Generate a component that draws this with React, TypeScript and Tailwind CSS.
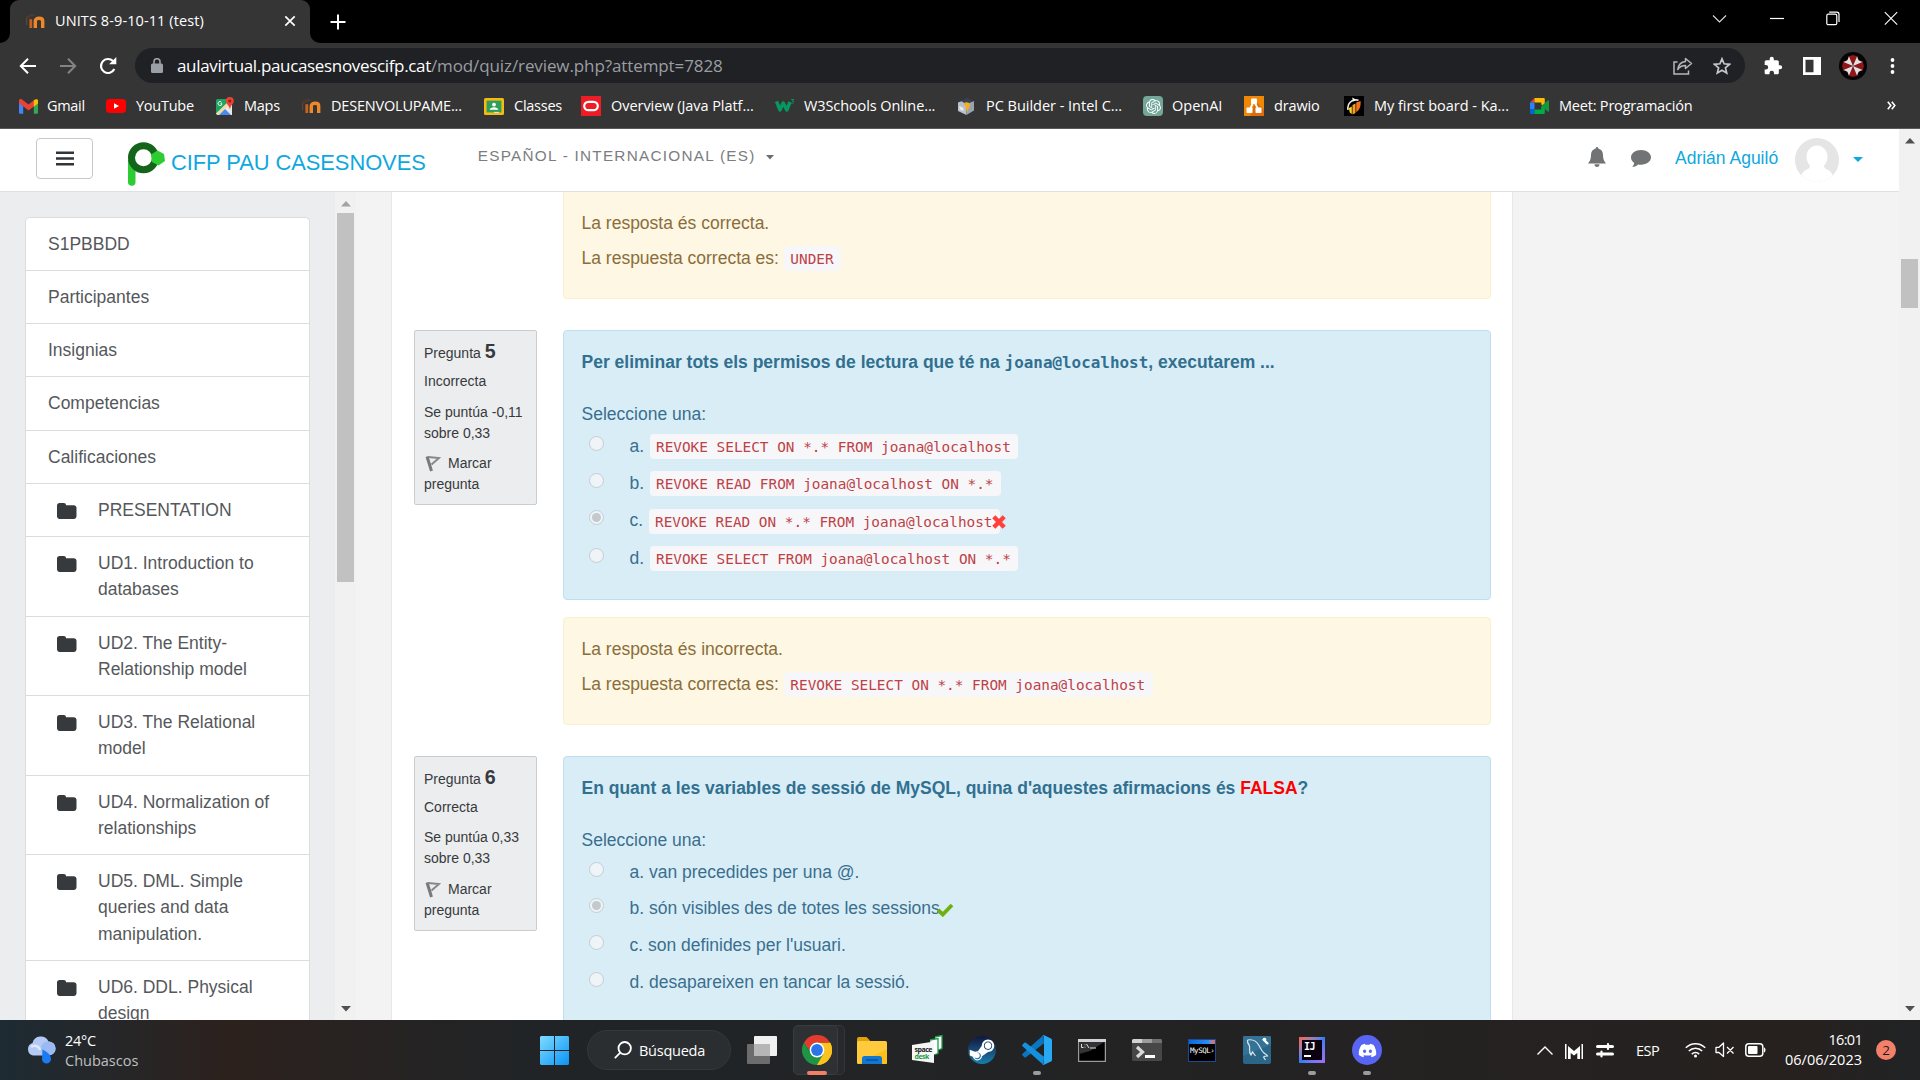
import React from 'react';
import { FaDiscord, FaSteamSymbol } from 'react-icons/fa';
import { SiOpenai } from 'react-icons/si';

/* ---------- small icons ---------- */

const MoodleIcon = ({ className = '' }: { className?: string }) => (
  <svg className={className} width="20" height="16" viewBox="0 0 20 16" fill="none">
    <path d="M0 3.600 7 .4l4.500 2-5 1.200L2.500 6z" fill="#4a3a30" />
    <path d="M1.600 5v7" stroke="#5a4636" strokeWidth="1.200" />
    <path d="M5.800 15V6.200" stroke="#c9631f" strokeWidth="2.800" />
    <path d="M10.300 15V8c0-3.600 7.400-3.600 7.400 0v7" stroke="#f0882a" strokeWidth="3.400" />
  </svg>
);

const GmailIcon = () => (
  <svg width="19" height="15" viewBox="0 0 19 15">
    <path d="M0 2v11.6c0 .8.5 1.2 1.2 1.2h3V6z" fill="#4285f4" />
    <path d="M19 2v11.6c0 .8-.5 1.2-1.2 1.2h-3V6z" fill="#34a853" />
    <path d="M14.8 1.2 19 .8v3.4l-4.2 3.2z" fill="#fbbc04" />
    <path d="M0 1.6C0 0 2-.3 3 .5L9.5 5.600 16 .5l-1.200 6.900-5.300 4L0 4z" fill="#ea4335" />
    <path d="M14.8 1.400C16.400-.2 19 0 19 2v2.200l-4.200 3.200z" fill="#fbbc04" />
  </svg>
);

const YouTubeIcon = () => (
  <svg width="20" height="14" viewBox="0 0 20 14">
    <rect width="20" height="14" rx="3.4" fill="#f00" />
    <path d="M8 4.200 13 7 8 9.800z" fill="#fff" />
  </svg>
);

const MapsIcon = () => (
  <svg width="18" height="19" viewBox="0 0 18 19">
    <rect x="0" y="2" width="16" height="16" rx="1.5" fill="#1fa463" />
    <path d="M0 16.500 14 3l2 1.500V18H1.500z" fill="#e8e8e8" />
    <path d="m3 18 6-6 6 6z" fill="#4a89f3" />
    <path d="M1 16 13 4l1.800 1.800L2.500 18z" fill="#fcd34d" opacity=".55" />
    <path d="M5.600 5.300a2 2 0 1 0 .4 1.500H4.400" stroke="#fff" strokeWidth=".9" fill="none" />
    <path d="M13.800 0a4 4 0 0 1 4 4c0 3-3.300 4-3.800 8.500C13.300 8 9.800 7 9.800 4a4 4 0 0 1 4-4z" fill="#ea4335" />
    <circle cx="13.800" cy="4" r="1.500" fill="#8c1f1a" />
  </svg>
);

const ClassesIcon = () => (
  <svg width="20" height="17" viewBox="0 0 20 17">
    <rect width="20" height="17" rx="1.500" fill="#f6bb12" />
    <rect x="2.600" y="2.600" width="14.800" height="11.800" fill="#2f9e5b" />
    <circle cx="10" cy="6.600" r="1.900" fill="#fff" />
    <path d="M5.600 11.800c.4-3.400 8.400-3.400 8.800 0z" fill="#fff" />
    <path d="M10 14.400h5" stroke="#e8e8e8" strokeWidth="1" />
  </svg>
);

const OracleIcon = () => (
  <svg width="20" height="20" viewBox="0 0 20 20">
    <rect width="20" height="20" fill="#ee1c25" />
    <rect x="3.200" y="5.800" width="13.600" height="8.400" rx="4.200" fill="none" stroke="#fff" strokeWidth="2.200" />
  </svg>
);

const W3Icon = () => (
  <svg width="20" height="16" viewBox="0 0 20 16" fill="none">
    <path d="M1.500 3.500 5 12 8.200 5l3.600 7L15 4" stroke="#059862" strokeWidth="3.400" strokeLinejoin="round" />
    <path d="M16.200 1.500h2.600l-1.400 1.600c2 .1 1.700 2.600-1.200 2" stroke="#059862" strokeWidth="1" />
  </svg>
);

const PcBuilderIcon = () => (
  <svg width="17" height="17" viewBox="0 0 17 17">
    <path d="m0 4.500 4-1.500 4.500 3V17L0 13z" fill="#b9bfca" />
    <path d="M8.500 6 16 3v9.500L8.500 17z" fill="#9aa2b1" />
    <path d="M2.500 2.800 9.500 0 15 3 8.500 6z" fill="#3a4256" />
    <path d="M5.500 6c1.500-3 7-2 6.500 1.500-.3 2-2 3-3 7L7.500 8z" fill="#f2b01e" />
    <path d="M1.500 8 5.500 10v3l-4-1.500z" fill="#e9ecf2" />
  </svg>
);

const OpenAiIcon = () => (
  <span className="flex size-5 items-center justify-center rounded-[4px] bg-[#74a79a] text-[15px] text-white">
    <SiOpenai />
  </span>
);

const DrawioIcon = () => (
  <svg width="20" height="20" viewBox="0 0 20 20">
    <rect width="20" height="20" fill="#f08705" />
    <path d="m12 5 8 9v6H6z" fill="#df6c0c" />
    <path d="M10 5 5.500 14M10 5l4.500 9" stroke="#fff" strokeWidth="1.800" />
    <rect x="7" y="2.500" width="6" height="5.500" rx=".8" fill="#fff" />
    <rect x="2.500" y="11.500" width="6" height="5.500" rx=".8" fill="#fff" />
    <rect x="11.500" y="11.500" width="6" height="5.500" rx=".8" fill="#fff" />
  </svg>
);

const BoardIcon = () => (
  <svg width="20" height="20" viewBox="0 0 20 20">
    <rect width="20" height="20" fill="#000" />
    <path d="M14.500 4.200C8 2.500 3 7.500 4 14" stroke="#e9e9e9" strokeWidth="1.600" fill="none" />
    <path d="M8 1.500 12 3.500 9.500 5.500z" fill="#fff" />
    <path d="m4.800 12 3-1.500v7.500l-2-1.500z" fill="#ffd21f" />
    <path d="m8.500 9 3-1.500v9.500l-3 1.500z" fill="#f9a01b" />
    <path d="M12.200 6.500 16.500 5c.6 5-1 9-4.300 11z" fill="#f37021" />
  </svg>
);

const MeetIcon = () => (
  <svg width="19" height="16" viewBox="0 0 19 16">
    <path d="M4.500 0 0 4.500h4.500z" fill="#ea4335" />
    <path d="M4.500 0h9c.8 0 1.300.5 1.300 1.300V8l-3.500-1.500V4.500H4.500z" fill="#fbbc04" />
    <path d="M0 4.500h4.500v7H0z" fill="#2684fc" />
    <path d="M0 11.500h4.500V16H1.300C.5 16 0 15.500 0 14.700z" fill="#0066da" />
    <path d="M4.500 11.500h6.800V8h3.500v6.700c0 .8-.5 1.300-1.300 1.300h-9z" fill="#00ac47" />
    <path d="m11.300 8 3.500-2.900L18 2.300c.4-.3 1 0 1 .5v10.400c0 .5-.6.800-1 .5l-3.200-2.700z" fill="#14963c" />
  </svg>
);

const bookmarks: { label: string; icon: React.ReactNode; cell: string; slot: string; text: string }[] = [
  { label: 'Gmail', icon: <GmailIcon />, cell: 'w-[87px]', slot: 'w-[28px]', text: 'tracking-[-0.3px]' },
  { label: 'YouTube', icon: <YouTubeIcon />, cell: 'w-[110px]', slot: 'w-[30px]', text: 'tracking-[-0.25px]' },
  { label: 'Maps', icon: <MapsIcon />, cell: 'w-[85px]', slot: 'w-[28px]', text: 'tracking-[-0.25px]' },
  { label: 'DESENVOLUPAME...', icon: <MoodleIcon />, cell: 'w-[183px]', slot: 'w-[30px]', text: 'tracking-[-0.2px]' },
  { label: 'Classes', icon: <ClassesIcon />, cell: 'w-[97px]', slot: 'w-[30px]', text: 'tracking-[-0.25px]' },
  { label: 'Overview (Java Platf...', icon: <OracleIcon />, cell: 'w-[194px]', slot: 'w-[30px]', text: 'tracking-[-0.05px]' },
  { label: 'W3Schools Online...', icon: <W3Icon />, cell: 'w-[183px]', slot: 'w-[29px]', text: 'tracking-[-0.1px]' },
  { label: 'PC Builder - Intel C...', icon: <PcBuilderIcon />, cell: 'w-[185px]', slot: 'w-[28px]', text: 'tracking-[-0.02px]' },
  { label: 'OpenAI', icon: <OpenAiIcon />, cell: 'w-[101px]', slot: 'w-[29px]', text: 'tracking-[0px]' },
  { label: 'drawio', icon: <DrawioIcon />, cell: 'w-[100px]', slot: 'w-[30px]', text: 'tracking-[-0.15px]' },
  { label: 'My first board - Ka...', icon: <BoardIcon />, cell: 'w-[186px]', slot: 'w-[30px]', text: 'tracking-[-0.02px]' },
  { label: 'Meet: Programación', icon: <MeetIcon />, cell: 'w-[180px]', slot: 'w-[29px]', text: 'tracking-[-0.2px]' },
];

/* ---------- browser chrome ---------- */

function TabStrip() {
  return (
    <div className="flex h-[43px] items-end bg-black">
      <svg width="10" height="43" viewBox="0 0 10 43"><path d="M10 33v10H0a10 10 0 0 0 10-10z" fill="#353535" /></svg>
      <div className="flex h-[43px] w-[300px] items-center rounded-t-[9px] bg-[#353535] pr-[13px] pb-[2px] pl-[15px]">
        <MoodleIcon />
        <span className="ml-[10px] flex-1 text-[14.5px] tracking-[0.1px] text-white">UNITS 8-9-10-11 (test)</span>
        <svg width="14" height="14" viewBox="0 0 14 14" stroke="#fff" strokeWidth="1.700"><path d="m2.300 2.300 9.400 9.400M11.700 2.300l-9.400 9.400" /></svg>
      </div>
      <svg width="10" height="43" viewBox="0 0 10 43"><path d="M0 33v10h10A10 10 0 0 1 0 33z" fill="#353535" /></svg>
      <div className="flex h-[43px] flex-1 items-center pl-[10px]">
        <svg width="16" height="16" viewBox="0 0 16 16" stroke="#fff" strokeWidth="2"><path d="M8 .5v15M.5 8h15" /></svg>
      </div>
      <div className="flex h-[43px] items-start pt-[11px] pr-[22px]">
        <svg className="mr-[43px]" width="15" height="15" viewBox="0 0 15 15" fill="none" stroke="#ddd" strokeWidth="1.100"><path d="m1 4.500 6.500 6.500L14 4.500" /></svg>
        <svg className="mr-[42px]" width="14" height="15" viewBox="0 0 14 15" stroke="#fff" strokeWidth="1.200"><path d="M0 7.500h14" /></svg>
        <svg className="mr-[44px]" width="14" height="15" viewBox="0 0 14 15" fill="none" stroke="#fff" strokeWidth="1.200"><rect x=".8" y="3.200" width="10" height="10.500" rx="1.500" /><path d="M3.200 1.200h7.600c1.400 0 2.200.8 2.200 2.200V11" /></svg>
        <svg width="14" height="15" viewBox="0 0 14 15" stroke="#fff" strokeWidth="1.100"><path d="m.8 1.200 12.400 12.400M13.200 1.200.8 13.600" /></svg>
      </div>
    </div>
  );
}

function AddressRow() {
  return (
    <div className="flex h-[45px] items-center bg-[#353535] pl-[19px]">
      <svg width="18" height="18" viewBox="0 0 18 18" fill="none" stroke="#fff" strokeWidth="2"><path d="M17 9H2M9 1.800 1.800 9 9 16.200" /></svg>
      <svg className="ml-[22px]" width="18" height="18" viewBox="0 0 18 18" fill="none" stroke="#838383" strokeWidth="2"><path d="M1 9h15M9 1.800 16.200 9 9 16.200" /></svg>
      <svg className="ml-[22px]" width="18" height="18" viewBox="0 0 18 18" fill="none" stroke="#fff" strokeWidth="2.200"><path d="M15.300 12A7 7 0 1 1 14 4.100" /><path d="M17.300 0v7.200h-7.200z" fill="#fff" stroke="none" /></svg>
      <div className="ml-[18px] flex h-[35px] w-[1610px] items-center rounded-full bg-[#202124] pr-[14px] pl-[16px]">
        <svg width="12" height="15" viewBox="0 0 12 15"><rect y="5.500" width="12" height="9.500" rx="1.500" fill="#9aa0a6" /><path d="M3 6V3.700a3 3 0 0 1 6 0V6" fill="none" stroke="#9aa0a6" strokeWidth="1.600" /></svg>
        <span className="ml-[14px] flex-1 text-[17px] whitespace-nowrap">
          <span className="tracking-[-0.34px] text-white">aulavirtual.paucasesnovescifp.cat</span>
          <span className="tracking-[-0.1px] text-[#9a9ea3]">/mod/quiz/review.php?attempt=7828</span>
        </span>
        <svg width="20" height="18" viewBox="0 0 20 18" fill="none" stroke="#b4b7ba" strokeWidth="1.500"><path d="M4.500 5H1v12h14.500v-3.500" /><path d="M12.500 1.500 18.500 6.500l-6 5V8.600C9 8.600 6.500 9.800 4.800 12.500 5.300 8 8 5 12.500 4.500z" strokeLinejoin="round" /></svg>
        <svg className="ml-[20px]" width="18" height="18" viewBox="0 0 18 18" fill="none" stroke="#c4c7c9" strokeWidth="1.700"><path d="m9 1.800 2.100 5 5.400.5-4.100 3.500 1.300 5.300L9 13.300l-4.700 2.800 1.300-5.300-4.100-3.500 5.400-.5z" /></svg>
      </div>
      <svg className="ml-[18px]" width="20" height="20" viewBox="0 0 24 24" fill="#fff"><path d="M20.500 11H19V7c0-1.100-.9-2-2-2h-4V3.500a2.500 2.500 0 0 0-5 0V5H4c-1.100 0-2 .9-2 2v3.800h1.500a2.700 2.700 0 0 1 0 5.400H2V20c0 1.100.9 2 2 2h3.800v-1.500a2.700 2.700 0 0 1 5.400 0V22H17c1.100 0 2-.9 2-2v-4h1.500a2.500 2.500 0 0 0 0-5z" /></svg>
      <svg className="ml-[20px]" width="18" height="18" viewBox="0 0 18 18"><path fillRule="evenodd" d="M0 0h18v18H0zM2.500 2.800v12.400h8V2.800z" fill="#fff" /></svg>
      <svg className="ml-[18px]" width="28" height="28" viewBox="0 0 28 28">
        <circle cx="14" cy="14" r="14" fill="#050505" />
        {[0, 90, 180, 270].map((a) => <path key={a} d="m14 14-5-9.500L14 3l5 1.500z" fill="#8f161b" transform={`rotate(${a} 14 14)`} />)}
        {[45, 135, 225, 315].map((a) => <path key={a} d="m14 14-3.800-9.500L14 6l3.800-1.500z" fill="#e2e2e2" transform={`rotate(${a} 14 14)`} />)}
      </svg>
      <svg className="ml-[23px]" width="5" height="18" viewBox="0 0 5 18" fill="#fff"><circle cx="2.500" cy="3" r="1.900" /><circle cx="2.500" cy="9" r="1.900" /><circle cx="2.500" cy="15" r="1.900" /></svg>
    </div>
  );
}

function BookmarksBar() {
  return (
    <div className="flex h-[41px] items-start border-b border-[#5a5a5a] bg-[#353535] pt-[8px] pl-[19px]">
      {bookmarks.map((b) => (
        <div key={b.label} className={`flex h-5 shrink-0 items-center ${b.cell}`}>
          <span className={`shrink-0 ${b.slot}`}>{b.icon}</span>
          <span className={`text-[14.5px] whitespace-nowrap text-white ${b.text}`}>{b.label}</span>
        </div>
      ))}
      <svg className="mt-[5px] ml-[177px]" width="9" height="9" viewBox="0 0 9 9" fill="none" stroke="#fff" strokeWidth="1.600"><path d="m.8.8 3 3.700-3 3.700M4.800.8l3 3.700-3 3.700" /></svg>
    </div>
  );
}

/* ---------- page ---------- */

function Navbar() {
  return (
    <header className="flex h-[63px] items-start border-b border-[#dee0e2] bg-white font-['Liberation_Sans',Arial,sans-serif]">
      <button className="mt-[9px] ml-[36px] flex h-[41px] w-[57px] items-center justify-center rounded-[4px] border border-[#c6c8ca] bg-white">
        <svg width="18" height="15" viewBox="0 0 18 15" fill="#30353a"><path d="M0 .5h18V3H0zM0 6.300h18v2.500H0zM0 12.100h18v2.500H0z" /></svg>
      </button>
      <svg className="mt-[13px] ml-[35px]" width="37" height="44" viewBox="0 0 37 44">
        <path d="M0 18h7.500v22a3.700 3.700 0 0 1-7.500 0z" fill="#2ecc33" />
        <circle cx="15.500" cy="15.700" r="12" fill="#fff" stroke="#14651b" strokeWidth="7" />
        <path d="m23 12.500 6.500-4 6.500 3.500 1 7-6.500 4.500-6.500-3.500z" fill="#2ecc33" />
      </svg>
      <span className="mt-[21px] ml-[6px] text-[21.9px] leading-[26px] tracking-[-0.06px] whitespace-nowrap text-[#0fa8de]">CIFP PAU CASESNOVES</span>
      <div className="mt-[17px] ml-[52px] flex items-center">
        <span className="text-[15.3px] leading-[20px] tracking-[1.26px] whitespace-nowrap text-[#7b7d80]">ESPAÑOL - INTERNACIONAL (ES)</span>
        <svg className="mt-[3px] ml-[10px]" width="8" height="5" viewBox="0 0 8 5"><path d="M0 0h8L4 4.500z" fill="#6c6e70" /></svg>
      </div>
      <div className="flex-1" />
      <svg className="mt-[18px]" width="18" height="20" viewBox="0 0 18 20" fill="#717375"><path d="M9 0c.8 0 1.300.6 1.300 1.500C13.500 2.300 15 4.800 15 8c0 4 1.200 6.200 3 8.500H0C1.800 14.200 3 12 3 8c0-3.200 1.500-5.700 4.700-6.500C7.700.6 8.200 0 9 0zM6.500 17.200h5C11.500 19 10.500 20 9 20s-2.500-1-2.500-2.800z" /></svg>
      <svg className="mt-[21px] ml-[25px]" width="20" height="17" viewBox="0 0 20 17" fill="#717375"><path d="M10 0c5.500 0 10 3.200 10 7.300s-4.500 7.400-10 7.400c-1 0-2-.1-2.900-.3C5.600 15.800 3.700 16.700 1.200 17c1.200-1.200 1.800-2.500 2-4C1.200 11.600 0 9.600 0 7.300 0 3.200 4.500 0 10 0z" /></svg>
      <span className="mt-[16px] ml-[24px] w-[103px] text-[17.5px] leading-[26px] tracking-[0px] whitespace-nowrap text-[#0fa8de]">Adrián Aguiló</span>
      <svg className="mt-[9px] ml-[17px]" width="44" height="44" viewBox="0 0 44 44">
        <clipPath id="avatar"><circle cx="22" cy="22" r="22" /></clipPath>
        <g clipPath="url(#avatar)"><rect width="44" height="44" fill="#e5e5e5" /><ellipse cx="22" cy="19" rx="10.500" ry="11.500" fill="#fff" /><path d="M15 26h14c-.5 4 2 5 4 6 4 1.800 5 5 6 12H5c1-7 2-10.200 6-12 2-1 4.500-2 4-6z" fill="#fff" /></g>
      </svg>
      <svg className="mt-[28px] mr-[36px] ml-[14px]" width="10" height="5" viewBox="0 0 10 5"><path d="M0 0h10L5 5z" fill="#0fa8de" /></svg>
    </header>
  );
}

const Folder = () => (
  <svg className="mr-[21px] shrink-0" width="20" height="16" viewBox="0 0 20 16" fill="#373a3c"><path d="M2.500 0h4.300c1.400 0 2.200.8 2.200 2.200h7.800c1.400 0 2.700 1 2.700 2.500v8.600c0 1.500-1.300 2.700-2.700 2.700H2.700C1.200 16 0 14.800 0 13.300V2.500C0 1 1.100 0 2.500 0z" /></svg>
);

const sidebarItems: { lines: string[]; height: string; folder?: boolean }[] = [
  { lines: ['S1PBBDD'], height: 'h-[53px]' },
  { lines: ['Participantes'], height: 'h-[53px]' },
  { lines: ['Insignias'], height: 'h-[53px]' },
  { lines: ['Competencias'], height: 'h-[54px]' },
  { lines: ['Calificaciones'], height: 'h-[53px]' },
  { lines: ['PRESENTATION'], height: 'h-[53px]', folder: true },
  { lines: ['UD1. Introduction to', 'databases'], height: 'h-[80px]', folder: true },
  { lines: ['UD2. The Entity-', 'Relationship model'], height: 'h-[79px]', folder: true },
  { lines: ['UD3. The Relational', 'model'], height: 'h-[80px]', folder: true },
  { lines: ['UD4. Normalization of', 'relationships'], height: 'h-[79px]', folder: true },
  { lines: ['UD5. DML. Simple', 'queries and data', 'manipulation.'], height: 'h-[106px]', folder: true },
  { lines: ['UD6. DDL. Physical', 'design'], height: 'h-[80px]', folder: true },
];

function Sidebar() {
  return (
    <aside className="flex w-[356px] shrink-0 bg-[#ecedef]">
      <div className="w-[335px] overflow-hidden pt-[25px] pl-[25px]">
        <ul className="w-[285px] overflow-hidden rounded-t-[5px] border border-b-0 border-[#dadcde] bg-white">
          {sidebarItems.map((item) => (
            <li key={item.lines[0]} className={`flex items-start border-b border-[#dadcde] pt-[13px] text-[17.5px] leading-[26.25px] text-[#55585b] ${item.height} ${item.folder ? 'pl-[31px]' : 'pl-[22px]'}`}>
              {item.folder && <span className="mt-[6px]"><Folder /></span>}
              <span>{item.lines.map((l) => <span key={l} className="block whitespace-nowrap">{l}</span>)}</span>
            </li>
          ))}
        </ul>
      </div>
      <ScrollTrack thumb="mt-[6px] h-[369px]" arrowTop="mt-[9px]" dim />
    </aside>
  );
}

function ScrollTrack({ thumb, arrowTop, dim }: { thumb: string; arrowTop: string; dim?: boolean }) {
  return (
    <div className="flex w-[21px] shrink-0 flex-col items-center bg-[#f1f1f1]">
      <svg className={`shrink-0 ${arrowTop}`} width="10" height="6" viewBox="0 0 10 6"><path d="M5 0 10 5.500H0z" fill={dim ? '#a3a3a3' : '#505050'} /></svg>
      <div className={`w-[17px] shrink-0 bg-[#c1c1c1] ${thumb}`} />
      <div className="flex-1" />
      <svg className="mb-[8px] shrink-0" width="10" height="6" viewBox="0 0 10 6"><path d="M5 5.500 10 0H0z" fill="#505050" /></svg>
    </div>
  );
}

function QuestionInfo({ number, state, mark, markGap, flagGap }: { number: string; state: string; mark: string; markGap: string; flagGap: string }) {
  return (
    <div className="h-[175px] w-[123px] shrink-0 rounded-[2px] border border-[#cacdd0] bg-[#ecedef] pt-[11px] pl-[9px] text-[14px] leading-[21px] text-[#373a3c]">
      <div className="h-[21px]">Pregunta <span className="text-[19.6px] leading-none font-bold">{number}</span></div>
      <div className="mt-[8px]">{state}</div>
      <div className={`whitespace-nowrap ${markGap}`}>{mark}<br />sobre 0,33</div>
      <div className={flagGap}>
        <div className="flex items-center">
          <svg className="mr-[7px] ml-[1px]" width="16" height="17" viewBox="0 0 16 17" fill="none"><path d="M2 1.500 6.500 16" stroke="#77797b" strokeWidth="3" /><path d="m3 2 11 1-7.500 6.500" stroke="#85878a" strokeWidth="2" /></svg>
          Marcar
        </div>
        pregunta
      </div>
    </div>
  );
}

const Code = ({ children, className = '' }: { children: React.ReactNode; className?: string }) => (
  <code className={`h-[25px] rounded-[4px] bg-[#f7f7f9] pr-[7.5px] pl-[6.5px] font-['DejaVu_Sans_Mono',monospace] text-[14.38px] leading-[27px] whitespace-nowrap text-[#bd4147] ${className}`}>{children}</code>
);

const Radio = ({ checked, className = '' }: { checked?: boolean; className?: string }) => (
  <span className={`flex size-[15px] shrink-0 items-center justify-center rounded-full border-[1.5px] border-[#c6cdd1] bg-[#eef4f7] ${className}`}>
    {checked && <span className="size-[9px] rounded-full bg-[#c3c9cc]" />}
  </span>
);

function Feedback({ text, answer, className }: { text: string; answer: string; className: string }) {
  return (
    <div className={`ml-[149px] w-[928px] border border-[#faf2cc] bg-[#fdf7e3] pl-[17.500px] text-[17.5px] leading-[26.25px] text-[#8a6d3b] ${className}`}>
      <p>{text}</p>
      <p className="mt-[8.75px] flex items-start whitespace-pre">La respuesta correcta es: <Code className="mt-[1px]">{answer}</Code></p>
    </div>
  );
}

const codeAnswers = [
  { letter: 'a.', code: 'REVOKE SELECT ON *.* FROM joana@localhost', row: 'h-[37px]' },
  { letter: 'b.', code: 'REVOKE READ FROM joana@localhost ON *.*', row: 'h-[38px]' },
  { letter: 'c.', code: 'REVOKE READ ON *.* FROM joana@localhost', row: 'h-[37px]', wrong: true },
  { letter: 'd.', code: 'REVOKE SELECT FROM joana@localhost ON *.*', row: 'h-[37px]' },
];

const textAnswers = [
  { text: 'a. van precedides per una @.', row: 'h-[36px]' },
  { text: 'b. són visibles des de totes les sessions.', row: 'h-[37px]', right: true },
  { text: "c. son definides per l'usuari.", row: 'h-[37px]' },
  { text: 'd. desapareixen en tancar la sessió.', row: 'h-[37px]' },
];

const panel = 'w-[928px] border border-[#bcdff1] bg-[#d9edf7] pt-[17.5px] pl-[17.500px] text-[17.5px] leading-[26.25px] text-[#396f8e]';

function Quiz() {
  return (
    <main className="w-[1122px] shrink-0 overflow-hidden border-x border-[#e6e8ea] bg-white pl-[22px]">
      <Feedback text="La resposta és correcta." answer="UNDER" className="h-[107px] rounded-b-[4px] border-t-0 pt-[18px]" />

      <div className="mt-[31px] flex gap-[26px]">
        <QuestionInfo number="5" state="Incorrecta" mark="Se puntúa -0,11" markGap="mt-[10px]" flagGap="mt-[9px]" />
        <div className={`h-[270px] rounded-[4px] ${panel}`}>
          <p className="font-bold whitespace-nowrap text-[#31708f]">
            Per eliminar tots els permisos de lectura que té na <span className="font-['DejaVu_Sans_Mono',monospace] text-[15.92px] leading-none">joana@localhost</span>, executarem ...
          </p>
          <p className="mt-[26px]">Seleccione una:</p>
          <div className="mt-[6.500px]">
            {codeAnswers.map((a) => (
              <div key={a.letter} className={`flex items-start ${a.row}`}>
                <Radio checked={a.wrong} className={a.wrong ? 'mt-[1px] ml-[7px]' : 'mt-[2px] ml-[7px]'} />
                <span className={`ml-[26px] w-[20px] ${a.wrong ? 'leading-[22px]' : 'leading-[24px]'}`}>{a.letter}</span>
                <Code className={a.wrong ? 'ml-[-1px]' : ''}>{a.code}</Code>
                {a.wrong && (
                  <svg className="mt-[6px] ml-[-8px]" width="14" height="14" viewBox="0 0 14 14"><path d="m1.800 1.800 10.400 10.400M12.200 1.800 1.800 12.200" stroke="#ff403c" strokeWidth="4.400" /></svg>
                )}
              </div>
            ))}
          </div>
        </div>
      </div>

      <Feedback text="La resposta és incorrecta." answer="REVOKE SELECT ON *.* FROM joana@localhost" className="mt-[17px] h-[108px] rounded-[4px] pt-[17.5px]" />

      <div className="mt-[31px] flex gap-[26px]">
        <QuestionInfo number="6" state="Correcta" mark="Se puntúa 0,33" markGap="mt-[9px]" flagGap="mt-[10px]" />
        <div className={`h-[275px] rounded-t-[4px] ${panel}`}>
          <p className="font-bold whitespace-nowrap text-[#31708f]">
            En quant a les variables de sessió de MySQL, quina d'aquestes afirmacions és <span className="text-[#f00]">FALSA</span>?
          </p>
          <p className="mt-[26px]">Seleccione una:</p>
          <div className="mt-[6.500px]">
            {textAnswers.map((a) => (
              <div key={a.text} className={`flex items-start ${a.row}`}>
                <Radio checked={a.right} className="mt-[2px] ml-[7px]" />
                <span className="ml-[26px] leading-[24px] whitespace-nowrap">{a.text}</span>
                {a.right && (
                  <svg className="mt-[7px] ml-[-9px]" width="18" height="14" viewBox="0 0 18 14"><path d="m2 7 4.800 4.500L16 2" fill="none" stroke="#6eb012" strokeWidth="3.800" /></svg>
                )}
              </div>
            ))}
          </div>
        </div>
      </div>
    </main>
  );
}

/* ---------- taskbar ---------- */

const ChromeIcon = () => (
  <svg width="30" height="30" viewBox="0 0 30 30">
    <path d="M15 15 28 7.500A15 15 0 0 1 15 30z" fill="#fcc31e" />
    <path d="M15 7.500h13A15 15 0 0 1 15 30l6.500-11.200z" fill="#fcc31e" />
    <path d="M2 7.500A15 15 0 0 0 15 30l6.500-11.200L8.500 18.800z" fill="#1e9444" />
    <path d="M2 7.500 8.500 18.800 15 15V7.500z" fill="#1e9444" />
    <path d="M2 7.500A15 15 0 0 1 28 7.500H15a7.500 7.500 0 0 0-6.800 4.500l-1 3z" fill="#e33b2e" />
    <circle cx="15" cy="15" r="7.400" fill="#fff" />
    <circle cx="15" cy="15" r="5.900" fill="#2a75e8" />
  </svg>
);

const ExplorerIcon = () => (
  <svg width="30" height="27" viewBox="0 0 30 27">
    <path d="M0 2a2 2 0 0 1 2-2h7.500L13 3.500V8H0z" fill="#e2a00b" />
    <rect y="4" width="30" height="23" rx="1.500" fill="#ffcb3d" />
    <path d="M30 12v13.500a1.500 1.500 0 0 1-1.500 1.500H0z" fill="#fdbf1b" />
    <path d="M5 27v-5.500A2.500 2.500 0 0 1 7.500 19h15a2.500 2.500 0 0 1 2.500 2.500V27z" fill="#1277d0" />
    <path d="M9 23h12" stroke="#0b4f96" strokeWidth="1.400" />
  </svg>
);

const SpacedeskIcon = () => (
  <div className="relative h-[30px] w-[31px]">
    <svg width="31" height="30" viewBox="0 0 31 30">
      <path d="m23 2 7-1.500v13L26 15" fill="#fff" stroke="#1f9d4b" strokeWidth="1.300" />
      <path d="m18 5 8-1.500v15L21 20" fill="#fff" stroke="#1f9d4b" strokeWidth="1.300" />
      <path d="m0 10 22-3.500V28L0 25z" fill="#f6f6f6" />
    </svg>
    <span className="absolute top-[11px] left-[3px] text-[7px] leading-[7px] font-bold tracking-[-0.5px] text-[#222]">space<br /><span className="text-[#1f9d4b]">desk</span></span>
  </div>
);

const SteamIcon = () => (
  <span className="flex size-7 items-center justify-center overflow-hidden rounded-full bg-linear-to-b from-[#10173f] to-[#1380ae] text-[28px] text-white"><FaSteamSymbol /></span>
);

const VsCodeIcon = () => (
  <svg width="30" height="30" viewBox="0 0 30 30">
    <path d="M22 8.200 4 22.300c-.5.400-1.200.3-1.600 0L.5 20.500c-.5-.5-.5-1.200 0-1.700L21.500 0z" fill="#0a76bf" />
    <path d="M22 21.800 4 7.700c-.5-.4-1.200-.3-1.600 0L.5 9.500c-.5.5-.5 1.200 0 1.700L21.500 30z" fill="#1490df" />
    <path d="M21.500 0 29 3.400c.6.3 1 .9 1 1.600v20c0 .7-.4 1.300-1 1.600L21.500 30c-.8.200-1.500 0-2-.5 1 .8 2.500.1 2.500-1.200V1.700C22 .4 20.500-.3 19.500.5c.5-.5 1.200-.7 2-.5z" fill="#2aa9f3" />
  </svg>
);

const CmdIcon = () => (
  <svg width="28" height="23" viewBox="0 0 28 23">
    <rect x=".6" y=".6" width="26.800" height="21.800" fill="#000" stroke="#9b9b9b" strokeWidth="1.300" />
    <path d="M0 0h28v3H0z" fill="#d0d3d8" />
    <path d="M1.300 3h25L12 12 1.300 15z" fill="#333" />
    <path d="M3.500 5v3.500h2M7 5.500v.7M7 7.800v.7M8.500 5l2.500 4M12 9h6" stroke="#ddd" strokeWidth="1" fill="none" />
  </svg>
);

const TerminalIcon = () => (
  <svg width="30" height="22" viewBox="0 0 30 22">
    <rect width="30" height="22" rx="1.500" fill="#474747" />
    <path d="M1.500 0H10v4H0V1.500A1.500 1.500 0 0 1 1.500 0z" fill="#d2d2d2" /><path d="M10 0h10v4H10z" fill="#9d9d9d" /><path d="M20 0h8.500A1.500 1.500 0 0 1 30 1.500V4H20z" fill="#717171" />
    <path d="m5 8 5.500 5L5 18" fill="none" stroke="#d9d9d9" strokeWidth="3.200" /><path d="M13 17.500h10" stroke="#fff" strokeWidth="3" />
  </svg>
);

const MysqlShellIcon = () => (
  <div className="flex h-[23px] w-7 flex-col overflow-hidden border border-[#1e4a94] bg-black">
    <div className="h-[4px] bg-linear-to-r from-[#0a67d8] via-[#2b8df5] via-75% to-[#e0674c]" />
    <span className="pt-[2px] pl-px font-['DejaVu_Sans_Mono'] text-[7.5px] leading-[9px] tracking-[-0.45px] text-white">MySQL›</span>
  </div>
);

const WorkbenchIcon = () => (
  <svg width="28" height="28" viewBox="0 0 28 28" fill="none">
    <rect width="28" height="28" rx="2" fill="#2b6688" /><path d="M0 0h28v9L0 20z" fill="#3b7c9f" opacity=".6" />
    <path d="M4.500 4c5-1 9 1 11.500 5.500 2 3.500 2.500 5.500 5 7.500 1.500 1.200 3 1.700 3.500 3-2 0-3.500.2-4 1l2 3M4.500 4c-.5 2.500 1 4.500 2 6 .5 2-1 6 1.500 9l1.500-3 3 4" stroke="#d8e8f0" strokeWidth="1.200" />
    <path d="m20 3 5 5" stroke="#fff" strokeWidth="2.400" /><circle cx="21.500" cy="3.500" r="1.800" fill="#fff" />
  </svg>
);

const IdeaIcon = () => (
  <div className="size-[26px] bg-linear-to-br from-[#fe5a3c] via-[#2f7df5] via-50% to-[#a56bf5] p-[3px]">
    <div className="flex h-5 w-5 flex-col bg-[#0a0210] pt-px pl-[2px]">
      <span className="font-['DejaVu_Sans_Mono'] text-[10px] leading-[11px] font-bold tracking-[-0.5px] text-white">IJ</span>
      <span className="mt-[3px] h-[1.500px] w-[7px] bg-white" />
    </div>
  </div>
);

const DiscordIcon = () => (
  <span className="flex size-[30px] items-center justify-center rounded-full bg-[#5865f2] text-[19px] text-white"><FaDiscord /></span>
);

const TaskViewIcon = () => (
  <svg width="30" height="28" viewBox="0 0 30 28"><rect x="7" width="23" height="20" rx="1" fill="#f0f0f0" /><rect y="8" width="23" height="20" rx="1" fill="#6c6c6c" /><path d="M7 8h16v12H7z" fill="#b6b6b6" /></svg>
);

const apps: { key: string; icon: React.ReactNode; mark?: string; active?: boolean }[] = [
  { key: 'taskview', icon: <TaskViewIcon /> },
  { key: 'chrome', icon: <ChromeIcon />, mark: 'w-[20px] bg-[#f27f66]', active: true },
  { key: 'explorer', icon: <ExplorerIcon /> },
  { key: 'spacedesk', icon: <SpacedeskIcon /> },
  { key: 'steam', icon: <SteamIcon /> },
  { key: 'vscode', icon: <VsCodeIcon />, mark: 'w-[8px] bg-[#9b9c9e]' },
  { key: 'cmd', icon: <CmdIcon /> },
  { key: 'terminal', icon: <TerminalIcon /> },
  { key: 'mysql', icon: <MysqlShellIcon /> },
  { key: 'workbench', icon: <WorkbenchIcon /> },
  { key: 'idea', icon: <IdeaIcon />, mark: 'w-[8px] bg-[#9b9c9e]' },
  { key: 'discord', icon: <DiscordIcon />, mark: 'w-[8px] bg-[#9b9c9e]' },
];

function Taskbar() {
  return (
    <footer className="flex h-[60px] shrink-0 items-center bg-linear-to-r from-[#202427] from-30% via-[#26211f] via-94% to-[#212325] text-white">
      <div className="flex h-full w-[540px] items-center bg-linear-to-r from-[#1d2b33] via-[#2c211d] via-42% to-[#202427] pl-[26px]">
        <svg width="30" height="28" viewBox="0 0 30 28">
          <path d="M7 19.500a6.500 6.500 0 0 1-.5-12.500A8.500 8.500 0 0 1 22.500 5.500 7 7 0 0 1 23 19.500z" fill="#b4c9f4" />
          <circle cx="22" cy="12.500" r="7" fill="#9bb9f3" /><path d="M5 11c3-2.500 8-1 9 3" stroke="#dde8fd" strokeWidth="2.500" fill="none" />
          <path d="M16.500 13.500c4 2 8.500 5 8.500 9.500a4.500 4.500 0 0 1-9 0z" fill="#1a7bf2" />
        </svg>
        <div className="mt-[2px] ml-[9px] text-[14.5px] leading-[20px]">
          <div className="tracking-[-0.3px]">24°C</div>
          <div className="tracking-[0px] text-[#bfc0c1]">Chubascos</div>
        </div>
      </div>
      <svg width="29" height="29" viewBox="0 0 29 29">
        <defs><linearGradient id="win" x1="0" y1="0" x2="1" y2="1"><stop offset="0" stopColor="#7fdcff" /><stop offset="1" stopColor="#0a93f5" /></linearGradient></defs>
        <path d="M1 0h13v14H0V1zM15 0h13l1 1v13H15zM0 15h14v14H1l-1-1zM15 15h14v13l-1 1H15z" fill="url(#win)" />
      </svg>
      <div className="ml-[18px] flex h-[40px] w-[144px] items-center rounded-full border border-[#35383b] bg-[#2b2e31] pl-[26px]">
        <svg width="18" height="18" viewBox="0 0 18 18" fill="none" stroke="#fff" strokeWidth="1.800"><circle cx="10.700" cy="7.200" r="6.200" /><path d="m6.300 11.600-5.500 5.500" /></svg>
        <span className="mt-[2px] ml-[7px] text-[14.5px] tracking-[-0.25px]">Búsqueda</span>
      </div>
      <div className="ml-[3.500px] flex h-full">
        {apps.map((a) => (
          <div key={a.key} className="relative flex h-full w-[55px] items-center justify-center">
            {a.active && <span className="absolute top-[5px] right-[0px] h-[50px] w-[20px] rounded-[5px] border border-[#34373a] bg-[#27292c]" />}
            {a.active && <span className="absolute top-[5px] left-[3px] h-[50px] w-[45px] rounded-[5px] border border-[#3a3d40] bg-[#2e3134]" />}
            <span className="relative">{a.icon}</span>
            {a.mark && <span className={`absolute bottom-[5px] h-[4px] rounded-full ${a.mark}`} />}
          </div>
        ))}
      </div>
      <div className="flex-1" />
      <svg width="16" height="9" viewBox="0 0 16 9" fill="none" stroke="#fff" strokeWidth="1.400"><path d="M.5 8.500 8 1l7.500 7.500" /></svg>
      <svg className="mt-[3px] ml-[12px]" width="18" height="15" viewBox="0 0 18 15" fill="#fff"><path d="M0 0h1.500v15H0zM3 2l6 5 6-5v13h-2.700V9L9 11.500 5.700 9V15H3zM16.500 0H18v15h-1.500z" /></svg>
      <svg className="ml-[13px]" width="18" height="16" viewBox="0 0 18 16" fill="none" stroke="#fff" strokeWidth="3" strokeLinecap="round"><path d="M1.500 4.500h15M1.500 12h15" /><path d="M12 2v5M5.500 9.500v5" strokeWidth="2.200" /></svg>
      <span className="mt-[2px] ml-[22px] w-[24px] text-[14.5px] tracking-[-0.5px]">ESP</span>
      <svg className="ml-[25px]" width="21" height="16" viewBox="0 0 21 16" fill="none" stroke="#fff" strokeWidth="1.500"><path d="M.8 5.800a13.700 13.700 0 0 1 19.400 0M3.800 9a9.500 9.500 0 0 1 13.400 0M6.800 12.100a5.300 5.300 0 0 1 7.400 0" /><circle cx="10.500" cy="14" r="1.500" fill="#fff" stroke="none" /></svg>
      <svg className="ml-[9px]" width="20" height="16" viewBox="0 0 20 16" fill="none" stroke="#fff" strokeWidth="1.300"><path d="M1 5.300h3L8.500 1v13.500L4 10.500H1zM12 5l6.500 6.500M18.500 5 12 11.500" strokeLinejoin="round" /></svg>
      <svg className="ml-[10px]" width="21" height="14" viewBox="0 0 21 14"><rect x=".8" y=".8" width="17" height="12.400" rx="3" fill="none" stroke="#fff" strokeWidth="1.500" /><rect x="3" y="3" width="9.500" height="8" rx="1" fill="#fff" /><path d="M19 4.500c2 .5 2 4.500 0 5z" fill="#fff" /></svg>
      <div className="ml-[18px] w-[78px] text-right text-[14.5px] leading-[20px]">
        <div className="tracking-[-0.7px]">16:01</div>
        <div>06/06/2023</div>
      </div>
      <span className="mr-[24px] ml-[14px] flex size-5 items-center justify-center rounded-full bg-[#f4806a] text-[13.5px] text-[#1b1b1b]">2</span>
    </footer>
  );
}

export default function App() {
  return (
    <div className="flex h-[1080px] w-[1920px] flex-col overflow-hidden bg-[#353535] font-['Open_Sans','Noto_Sans',sans-serif]">
      <TabStrip />
      <AddressRow />
      <BookmarksBar />
      <div className="flex min-h-0 flex-1">
        <div className="flex w-[1899px] flex-col">
          <Navbar />
          <div className="flex min-h-0 flex-1 bg-[#f3f3f3] font-['Liberation_Sans',Arial,sans-serif]">
            <Sidebar />
            <div className="w-[35px] shrink-0" />
            <Quiz />
          </div>
        </div>
        <ScrollTrack thumb="mt-[115px] h-[49px]" arrowTop="mt-[9px]" />
      </div>
      <Taskbar />
    </div>
  );
}
